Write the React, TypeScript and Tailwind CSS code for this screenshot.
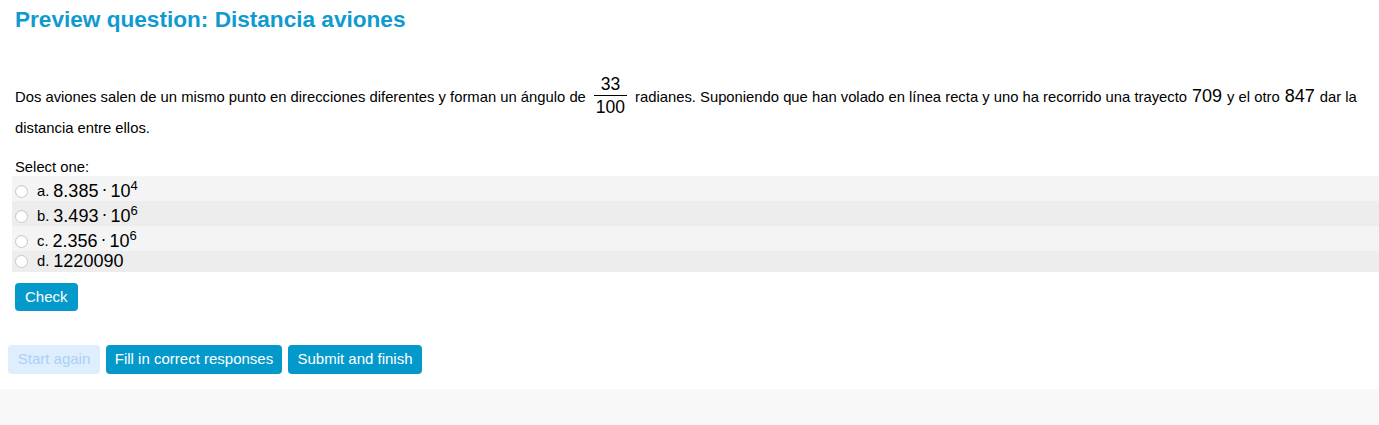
import React from "react";

const font = { fontFamily: '"Liberation Sans", Arial, Helvetica, sans-serif' };

function Frac({ n, d }: { n: string; d: string }) {
  return (
    <span className="inline-flex flex-col items-center align-middle mx-[8px] text-[17.5px] leading-[22px] relative top-[-2px]">
      <span className="px-[2px]">{n}</span>
      <span className="block h-px w-full bg-black" />
      <span className="px-[2px]">{d}</span>
    </span>
  );
}

function Sci({ m, e }: { m: string; e: string }) {
  return (
    <span className="text-[18px]">
      {m}
      <span className="mx-[3px] relative top-[-2px]">·</span>
      10
      <sup className="text-[13px] relative top-[-7px]">{e}</sup>
    </span>
  );
}

function Row({ letter, children, shade }: { letter: string; children: React.ReactNode; shade: string }) {
  return (
    <div className={`flex items-center h-[25px] pl-[3px] pt-[6px] ${shade}`}>
      <span className="w-[13px] h-[13px] rounded-full border border-[#c8c8c8] bg-white shadow-[inset_0_1px_1px_rgba(0,0,0,0.06)]" />
      <span className="ml-[9px] text-[14.8px] text-black">{letter}.</span>
      <span className="ml-[4px] text-black">{children}</span>
    </div>
  );
}

export default function App() {
  return (
    <div className="w-[1379px] h-[425px] bg-white overflow-hidden flex flex-col" style={font}>
      <div className="px-[15px]">
        <h1 className="pt-[6px] text-[22.6px] leading-[27px] font-bold text-[#0f9ad0]">
          Preview question: Distancia aviones
        </h1>
        <div className="mt-[40px] text-[14.8px] text-black leading-[21px]">
          <div className="h-[48px] flex items-center whitespace-nowrap">
            <span>Dos aviones salen de un mismo punto en direcciones diferentes y forman un ángulo de</span>
            <Frac n="33" d="100" />
            <span>radianes. Suponiendo que han volado en línea recta y uno ha recorrido una trayecto</span>
            <span className="text-[18px] mx-[5px] relative top-[-1px]">709</span>
            <span>y el otro</span>
            <span className="text-[18px] mx-[5px] relative top-[-1px]">847</span>
            <span>dar la</span>
          </div>
          <div className="mt-[-8px] h-[30px] flex items-center">distancia entre ellos.</div>
        </div>
        <div className="mt-[16px] text-[14.8px] leading-[16px] text-black">Select one:</div>
      </div>
      <div className="ml-[12px] mt-[1px] flex flex-col">
        <Row letter="a" shade="bg-[#f4f4f4]">
          <Sci m="8.385" e="4" />
        </Row>
        <Row letter="b" shade="bg-[#ededed]">
          <Sci m="3.493" e="6" />
        </Row>
        <Row letter="c" shade="bg-[#f4f4f4]">
          <Sci m="2.356" e="6" />
        </Row>
        <div className="flex items-center h-[21px] pl-[3px] bg-[#ededed]">
          <span className="w-[13px] h-[13px] rounded-full border border-[#c8c8c8] bg-white" />
          <span className="ml-[9px] text-[14.8px] text-black">d.</span>
          <span className="ml-[4px] text-[18px] text-black">1220090</span>
        </div>
      </div>
      <div className="px-[15px] mt-[11px]">
        <button className="h-[28px] px-[10px] rounded-[4px] bg-[#0399cb] text-white text-[15px] leading-[28px]">
          Check
        </button>
      </div>
      <div className="mt-[34px] pl-[8px] flex gap-[6px]">
        <button className="h-[29px] w-[92px] rounded-[4px] bg-[#dfeefd] text-[#a9d1f7] text-[15px]">Start again</button>
        <button className="h-[29px] w-[176px] rounded-[4px] bg-[#0399cb] text-white text-[15px]">Fill in correct responses</button>
        <button className="h-[29px] w-[134px] rounded-[4px] bg-[#0399cb] text-white text-[15px]">Submit and finish</button>
      </div>
      <div className="mt-[15px] flex-1 bg-[#f8f8f8]" />
    </div>
  );
}
